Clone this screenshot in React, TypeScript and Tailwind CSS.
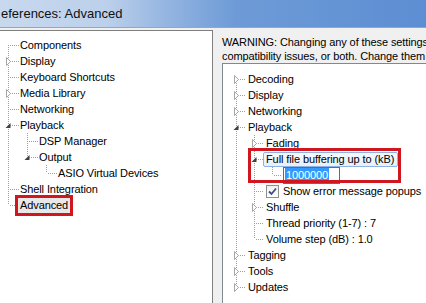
import React from "react";

type TreeNode = {
  label: string;
  state?: "open" | "closed";
  kind?: "check" | "edit" | "selected" | "hot";
  children?: TreeNode[];
};

const leftTree: TreeNode[] = [
  { label: "Components" },
  { label: "Display", state: "closed" },
  { label: "Keyboard Shortcuts" },
  { label: "Media Library", state: "closed" },
  { label: "Networking" },
  {
    label: "Playback",
    state: "open",
    children: [
      { label: "DSP Manager" },
      { label: "Output", state: "open", children: [{ label: "ASIO Virtual Devices" }] },
    ],
  },
  { label: "Shell Integration" },
  { label: "Advanced", kind: "selected" },
];

const rightTree: TreeNode[] = [
  { label: "Decoding", state: "closed" },
  { label: "Display", state: "closed" },
  { label: "Networking", state: "closed" },
  {
    label: "Playback",
    state: "open",
    children: [
      { label: "Fading", state: "closed" },
      {
        label: "Full file buffering up to (kB)",
        state: "open",
        kind: "hot",
        children: [{ label: "1000000", kind: "edit" }],
      },
      { label: "Show error message popups", kind: "check" },
      { label: "Shuffle", state: "closed" },
      { label: "Thread priority (1-7) : 7" },
      { label: "Volume step (dB) : 1.0" },
    ],
  },
  { label: "Tagging", state: "closed" },
  { label: "Tools", state: "closed" },
  { label: "Updates", state: "closed" },
];

// dotted tree lines, one pixel on / one off
function vdots(x: number, y0: number, y1: number) {
  const out = [];
  for (let y = y0; y < y1; y += 2) out.push(<rect key={`v${x}-${y}`} x={x} y={y} width={1} height={1} />);
  return out;
}
function hdots(y: number, x0: number, x1: number) {
  const out = [];
  for (let x = x0; x < x1; x += 2) out.push(<rect key={`h${y}-${x}`} x={x} y={y} width={1} height={1} />);
  return out;
}

function Cell({
  w,
  top,
  bottom,
  elbow,
  state,
}: {
  w: number;
  top: boolean;
  bottom: boolean;
  elbow?: boolean;
  state?: "open" | "closed";
}) {
  return (
    <svg width={w} height={16} className="shrink-0">
      <g fill="#a0a0a0">
        {top && vdots(8, 0, 8)}
        {bottom && vdots(8, 8, 16)}
        {elbow && hdots(8, 10, w)}
      </g>
      {state === "closed" && (
        <polygon points="6.5,4.5 10.5,8.5 6.5,12.5" fill="#fff" stroke="#a6a6a6" strokeWidth={1} />
      )}
      {state === "open" && <polygon points="10.5,6 10.5,11 5.5,11" fill="#404040" />}
    </svg>
  );
}

function Label({ node, pad }: { node: TreeNode; pad: number }) {
  if (node.kind === "selected")
    return (
      <span
        className="ml-[-1px] flex h-[15px] items-center bg-[#e8e8e8] pr-[2px] outline-[3px] outline-solid outline-[#d0161e]"
        style={{ paddingLeft: pad + 1 }}
      >
        {node.label}
      </span>
    );
  if (node.kind === "hot")
    return (
      <span
        className="ml-[-1px] flex h-[15px] items-center rounded-[2px] border border-[#8db2e3] bg-[linear-gradient(#f5f9fe,#e6f0fb)] pr-[3px]"
        style={{ paddingLeft: pad }}
      >
        {node.label}
      </span>
    );
  if (node.kind === "check")
    return (
      <span className="flex items-center" style={{ paddingLeft: pad }}>
        <span className="flex h-[13px] w-[13px] items-center justify-center border border-[#8e8f8f] bg-[linear-gradient(#f0f0f0,#ffffff)]">
          <svg width="9" height="9" viewBox="0 0 9 9">
            <path d="M1 4.5 L3.5 7 L8 1.5" fill="none" stroke="#3b4d86" strokeWidth={1.8} />
          </svg>
        </span>
        <span className="ml-[4px]">{node.label}</span>
      </span>
    );
  if (node.kind === "edit")
    return (
      <span
        className="flex h-[17px] w-[57px] items-center border border-[#6a6a6a] bg-white px-[1px]"
        style={{ marginLeft: pad - 1 }}
      >
        <span className="bg-[#3399ff] px-[1px] leading-[14px] text-white">{node.label}</span>
      </span>
    );
  return <span style={{ paddingLeft: pad }}>{node.label}</span>;
}

function Rows({
  nodes,
  ind,
  lines,
  root,
}: {
  nodes: TreeNode[];
  ind: number;
  lines: boolean[];
  root: boolean;
}) {
  return (
    <>
      {nodes.map((n, i) => {
        const last = i === nodes.length - 1;
        return (
          <React.Fragment key={n.label}>
            <div className="flex h-[16px] items-center whitespace-nowrap">
              {lines.map((on, j) => (
                <Cell key={j} w={ind} top={on} bottom={on} />
              ))}
              <Cell w={ind} top={!(root && i === 0)} bottom={!last} elbow state={n.state} />
              <Label node={n} pad={20 - ind} />
            </div>
            {n.state === "open" && n.children && (
              <Rows nodes={n.children} ind={ind} lines={[...lines, !last]} root={false} />
            )}
          </React.Fragment>
        );
      })}
    </>
  );
}

export default function App() {
  return (
    <div className="flex h-[303px] w-[426px] flex-col overflow-hidden bg-[#f0f0f0] font-['Liberation_Sans',Arial,sans-serif] text-[11px] tracking-[-0.1px] text-black">
      {/* Title bar */}
      <div className="flex h-[28px] shrink-0 items-center border-b border-[#8ca8cf] bg-[linear-gradient(90deg,#c8d9ee_0%,#bcd0eb_25%,#97b7e1_38%,#6e9bd7_55%,#5d8ed3_100%)] pl-[1px]">
        <span className="text-[13px] tracking-normal text-[#101010]">eferences: Advanced</span>
      </div>

      <div className="flex min-h-0 flex-1 pt-[2px]">
        {/* Page list */}
        <div className="w-[213px] shrink-0 border-t border-r border-[#7f7f7f] bg-white pt-[6px]">
          <Rows nodes={leftTree} ind={19} lines={[]} root />
        </div>

        {/* Advanced page */}
        <div className="flex min-w-0 flex-1 flex-col pt-[5px]">
          <div className="whitespace-nowrap pl-[9px] leading-[14px]">
            <div>WARNING: Changing any of these settings</div>
            <div>compatibility issues, or both. Change them</div>
          </div>
          <div className="relative ml-[9px] w-[220px] flex-1 border-t border-l border-[#828790] bg-white pt-[7px] pl-[5px]">
            <Rows nodes={rightTree} ind={18} lines={[]} root />
            <div className="absolute top-[84px] left-[25px] h-[35px] w-[153px] border-[3px] border-[#d0161e]" />
          </div>
        </div>
      </div>
    </div>
  );
}
